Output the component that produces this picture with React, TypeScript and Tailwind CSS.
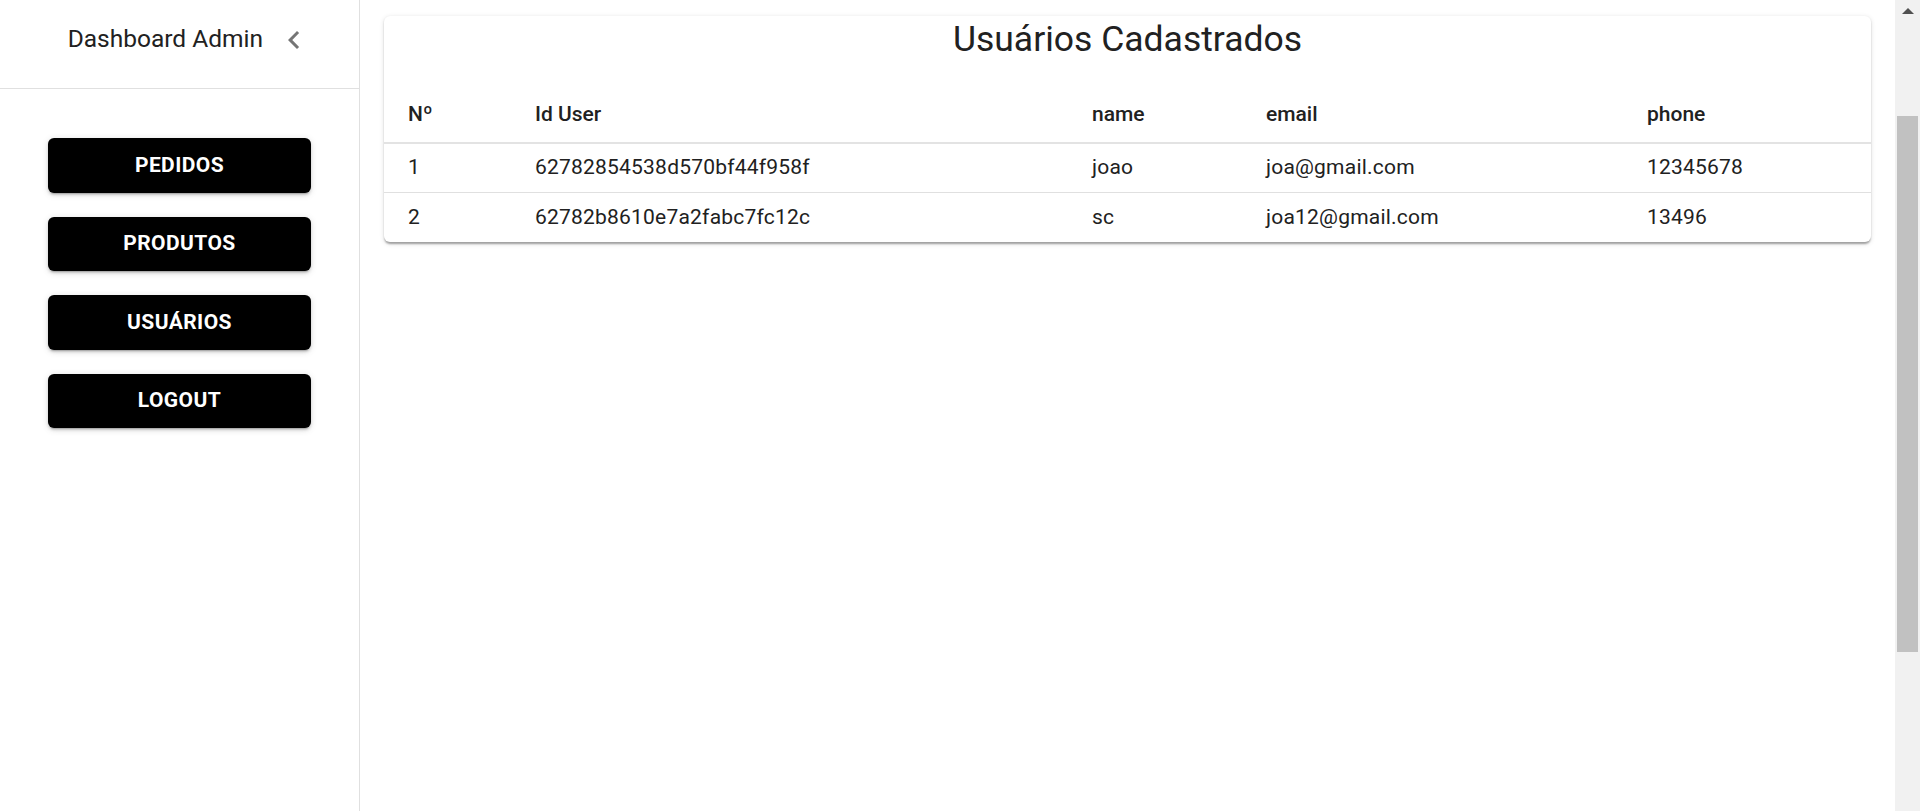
import React from 'react';

const font = { fontFamily: 'Roboto, "Liberation Sans", sans-serif' };

const menu = ['PEDIDOS', 'PRODUTOS', 'USUÁRIOS', 'LOGOUT'];

const users = [
  { id: '62782854538d570bf44f958f', name: 'joao', email: 'joa@gmail.com', phone: '12345678' },
  { id: '62782b8610e7a2fabc7fc12c', name: 'sc', email: 'joa12@gmail.com', phone: '13496' },
];

const cols = 'grid grid-cols-[127px_557px_174px_381px_1fr]';

function Sidebar() {
  return (
    <aside className="w-[360px] shrink-0 h-full border-r border-[#e0e0e0] flex flex-col">
      <div className="h-[89px] flex items-center justify-end pr-[47px] pb-[9px] border-b-[1.5px] border-[#e0e0e0]">
        <span className="text-[24.5px] leading-none text-[#212121]">Dashboard Admin</span>
        <svg viewBox="0 0 24 24" className="w-[36px] h-[36px] ml-[13px] fill-[#757575]">
          <path d="M15.41 7.41 14 6l-6 6 6 6 1.41-1.41L10.83 12z" />
        </svg>
      </div>
      <nav className="flex flex-col items-center gap-[24px] pt-[49px]">
        {menu.map((m) => (
          <button
            key={m}
            className="w-[263px] h-[54.5px] rounded-[6px] bg-black text-white text-[21px] font-bold tracking-[0.02em] shadow-[0px_3px_1.5px_-2px_rgba(0,0,0,0.2),0px_2px_3px_0px_rgba(0,0,0,0.14),0px_1.5px_7px_0px_rgba(0,0,0,0.12)]"
          >
            {m}
          </button>
        ))}
      </nav>
    </aside>
  );
}

function UsersTable() {
  return (
    <section className="bg-white rounded-[6px] shadow-[0px_3px_2px_-1px_rgba(0,0,0,0.2),0px_1.5px_2px_0px_rgba(0,0,0,0.14),0px_1.5px_5px_0px_rgba(0,0,0,0.12)]">
      <h1 className="h-[48px] flex items-center justify-center text-[35.5px] leading-none font-normal text-[#212121]">
        Usuários Cadastrados
      </h1>
      <div className="mt-[24px] text-[21px] text-[#212121]">
        <div className={`${cols} h-[56px] items-center border-b-2 border-[#e3e3e3] font-medium`}>
          <div className="pl-[24px]">Nº</div>
          <div className="pl-[24px]">Id User</div>
          <div className="pl-[24px]">name</div>
          <div className="pl-[24px]">email</div>
          <div className="pl-[24px]">phone</div>
        </div>
        {users.map((u, i) => (
          <div
            key={u.id}
            className={`${cols} h-[49px] items-center ${i < users.length - 1 ? 'border-b border-[#e0e0e0]' : ''}`}
          >
            <div className="pl-[24px]">{i + 1}</div>
            <div className="pl-[24px] tracking-[0.01em]">{u.id}</div>
            <div className="pl-[24px] tracking-[0.01em]">{u.name}</div>
            <div className="pl-[24px] tracking-[0.01em]">{u.email}</div>
            <div className="pl-[24px] tracking-[0.01em]">{u.phone}</div>
          </div>
        ))}
      </div>
    </section>
  );
}

function Scrollbar() {
  return (
    <div className="w-[25px] shrink-0 h-full bg-[#f1f1f1] flex flex-col">
      <div className="h-[25px] flex items-start justify-center pt-[8px]">
        <div className="w-0 h-0 border-l-[6px] border-r-[6px] border-b-[6px] border-l-transparent border-r-transparent border-b-[#505050]" />
      </div>
      <div className="mt-[91px] mx-[2px] h-[536px] bg-[#c1c1c1]" />
    </div>
  );
}

export default function App() {
  return (
    <div className="w-full h-[811px] flex bg-white overflow-hidden" style={font}>
      <Sidebar />
      <main className="flex-1 min-w-0 pt-[16px] px-[24px]">
        <UsersTable />
      </main>
      <Scrollbar />
    </div>
  );
}
